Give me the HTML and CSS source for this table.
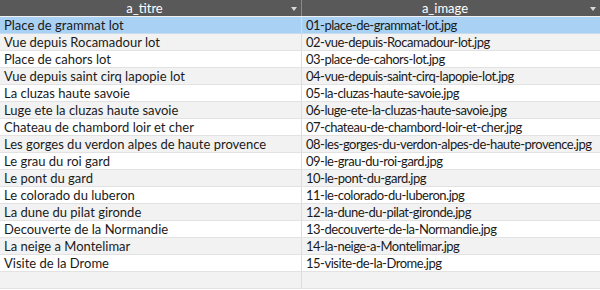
FILE: index.html
```html
<!DOCTYPE html>
<html>
<head>
<meta charset="utf-8">
<link rel="stylesheet" href="styles.css">
</head>
<body>
<div class="grid">
  <div class="row head">
    <div class="cell c1"><span class="htxt">a_titre</span><span class="arrow"></span></div>
    <div class="cell c2"><span class="htxt">a_image</span><span class="arrow"></span></div>
  </div>
  <div class="row sel"><div class="cell c1">Place de grammat lot</div><div class="cell c2">01-place-de-grammat-lot.jpg</div></div>
  <div class="row"><div class="cell c1">Vue depuis Rocamadour lot</div><div class="cell c2">02-vue-depuis-Rocamadour-lot.jpg</div></div>
  <div class="row"><div class="cell c1">Place de cahors lot</div><div class="cell c2">03-place-de-cahors-lot.jpg</div></div>
  <div class="row"><div class="cell c1">Vue depuis saint cirq lapopie lot</div><div class="cell c2">04-vue-depuis-saint-cirq-lapopie-lot.jpg</div></div>
  <div class="row"><div class="cell c1">La cluzas haute savoie</div><div class="cell c2">05-la-cluzas-haute-savoie.jpg</div></div>
  <div class="row"><div class="cell c1">Luge ete la cluzas haute savoie</div><div class="cell c2">06-luge-ete-la-cluzas-haute-savoie.jpg</div></div>
  <div class="row"><div class="cell c1">Chateau de chambord loir et cher</div><div class="cell c2">07-chateau-de-chambord-loir-et-cher.jpg</div></div>
  <div class="row"><div class="cell c1">Les gorges du verdon alpes de haute provence</div><div class="cell c2">08-les-gorges-du-verdon-alpes-de-haute-provence.jpg</div></div>
  <div class="row"><div class="cell c1">Le grau du roi gard</div><div class="cell c2">09-le-grau-du-roi-gard.jpg</div></div>
  <div class="row"><div class="cell c1">Le pont du gard</div><div class="cell c2">10-le-pont-du-gard.jpg</div></div>
  <div class="row"><div class="cell c1">Le colorado du luberon</div><div class="cell c2">11-le-colorado-du-luberon.jpg</div></div>
  <div class="row"><div class="cell c1">La dune du pilat gironde</div><div class="cell c2">12-la-dune-du-pilat-gironde.jpg</div></div>
  <div class="row"><div class="cell c1">Decouverte de la Normandie</div><div class="cell c2">13-decouverte-de-la-Normandie.jpg</div></div>
  <div class="row"><div class="cell c1">La neige a Montelimar</div><div class="cell c2">14-la-neige-a-Montelimar.jpg</div></div>
  <div class="row"><div class="cell c1">Visite de la Drome</div><div class="cell c2">15-visite-de-la-Drome.jpg</div></div>
  <div class="row"><div class="cell c1"></div><div class="cell c2"></div></div>
</div>
</body>
</html>
```
FILE: styles.css
```css
html, body {
  margin: 0;
  padding: 0;
  background: #ffffff;
}
body {
  font-family: Lato, "Open Sans", sans-serif;
  font-size: 13px;
  color: #1a1a1a;
  width: 600px;
  height: 290px;
  overflow: hidden;
}
.grid {
  display: flex;
  flex-direction: column;
}
.row {
  display: grid;
  grid-template-columns: 302px 298px;
  height: 17px;
  box-sizing: border-box;
  border-bottom: 1px solid #e2e2e2;
}
.row:nth-child(odd) {
  background: #f2f2f2;
}
.row:nth-child(even) {
  background: #ffffff;
}
.row.sel {
  background: #a9d1f4;
  border-bottom-color: #c9dcec;
}
.cell {
  padding-left: 4px;
  line-height: 16px;
  white-space: nowrap;
  overflow: hidden;
}
.c1 {
  border-right: 1px solid #dcdcdc;
  box-sizing: border-box;
}
.c2 {
  letter-spacing: -0.48px;
}
.row.head {
  background: #595959;
  height: 17px;
  border-bottom: 1px solid #f0f0f0;
}
.head .cell {
  position: relative;
  color: #ffffff;
  display: flex;
  justify-content: center;
  padding: 0 12px 0 0;
  line-height: 16px;
  letter-spacing: 0;
}
.head .c1 {
  border-right: 1px solid #8a8a8a;
}
.arrow {
  position: absolute;
  right: 4px;
  top: 7px;
  width: 0;
  height: 0;
  border-left: 3px solid transparent;
  border-right: 3px solid transparent;
  border-top: 4px solid #d8d8d8;
}
```
